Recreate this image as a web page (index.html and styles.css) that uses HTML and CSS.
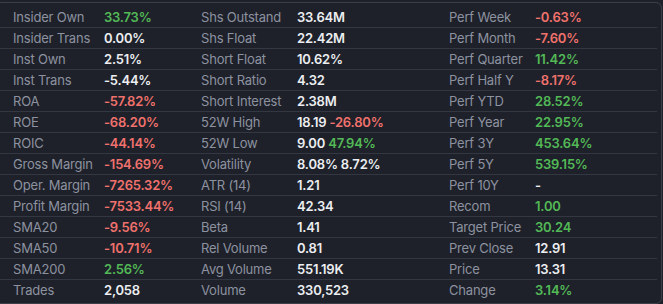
FILE: index.html
```html
<!DOCTYPE html>
<html>
<head>
<meta charset="utf-8">
<link rel="stylesheet" href="styles.css">
</head>
<body>
<div class="panel">
  <div class="row"><span class="lbl">Insider Own</span><span class="val up">33.73%</span><span class="lbl">Shs Outstand</span><span class="val">33.64M</span><span class="lbl">Perf Week</span><span class="val down">-0.63%</span></div>
  <div class="row"><span class="lbl">Insider Trans</span><span class="val">0.00%</span><span class="lbl">Shs Float</span><span class="val">22.42M</span><span class="lbl">Perf Month</span><span class="val down">-7.60%</span></div>
  <div class="row"><span class="lbl">Inst Own</span><span class="val">2.51%</span><span class="lbl">Short Float</span><span class="val">10.62%</span><span class="lbl">Perf Quarter</span><span class="val up">11.42%</span></div>
  <div class="row"><span class="lbl">Inst Trans</span><span class="val">-5.44%</span><span class="lbl">Short Ratio</span><span class="val">4.32</span><span class="lbl">Perf Half Y</span><span class="val down">-8.17%</span></div>
  <div class="row"><span class="lbl">ROA</span><span class="val down">-57.82%</span><span class="lbl">Short Interest</span><span class="val">2.38M</span><span class="lbl">Perf YTD</span><span class="val up">28.52%</span></div>
  <div class="row"><span class="lbl">ROE</span><span class="val down">-68.20%</span><span class="lbl">52W High</span><span class="val">18.19 <span class="down">-26.80%</span></span><span class="lbl">Perf Year</span><span class="val up">22.95%</span></div>
  <div class="row"><span class="lbl">ROIC</span><span class="val down">-44.14%</span><span class="lbl">52W Low</span><span class="val">9.00 <span class="up">47.94%</span></span><span class="lbl">Perf 3Y</span><span class="val up">453.64%</span></div>
  <div class="row"><span class="lbl">Gross Margin</span><span class="val down">-154.69%</span><span class="lbl">Volatility</span><span class="val">8.08% 8.72%</span><span class="lbl">Perf 5Y</span><span class="val up">539.15%</span></div>
  <div class="row"><span class="lbl">Oper. Margin</span><span class="val down">-7265.32%</span><span class="lbl">ATR (14)</span><span class="val">1.21</span><span class="lbl">Perf 10Y</span><span class="val">-</span></div>
  <div class="row"><span class="lbl">Profit Margin</span><span class="val down">-7533.44%</span><span class="lbl">RSI (14)</span><span class="val">42.34</span><span class="lbl">Recom</span><span class="val up">1.00</span></div>
  <div class="row"><span class="lbl">SMA20</span><span class="val down">-9.56%</span><span class="lbl">Beta</span><span class="val">1.41</span><span class="lbl">Target Price</span><span class="val up">30.24</span></div>
  <div class="row"><span class="lbl">SMA50</span><span class="val down">-10.71%</span><span class="lbl">Rel Volume</span><span class="val">0.81</span><span class="lbl">Prev Close</span><span class="val">12.91</span></div>
  <div class="row"><span class="lbl">SMA200</span><span class="val up">2.56%</span><span class="lbl">Avg Volume</span><span class="val">551.19K</span><span class="lbl">Price</span><span class="val">13.31</span></div>
  <div class="row"><span class="lbl">Trades</span><span class="val">2,058</span><span class="lbl">Volume</span><span class="val">330,523</span><span class="lbl">Change</span><span class="val up">3.14%</span></div>
</div>
</body>
</html>
```
FILE: styles.css
```css
html, body {
  margin: 0;
  padding: 0;
  background: #1e2129;
  overflow: hidden;
}
body {
  font-family: Inter, "Noto Sans", sans-serif;
  font-size: 13px;
  letter-spacing: -0.2px;
}
.panel {
  margin: 2px 1px 0 -5px;
  border: 1px solid #3b3f4a;
  border-radius: 6px;
  padding-top: 4px;
  height: 302px;
  box-sizing: border-box;
}
.row {
  display: grid;
  grid-template-columns: 91px 97px 96px 152px 86px 1fr;
  align-items: center;
  height: 20px;
  margin: 0 4px;
  padding-left: 13px;
  border-bottom: 1px solid #333742;
  white-space: nowrap;
}
.row:last-child {
  border-bottom: none;
}
.lbl {
  color: #8d92a0;
}
.val {
  color: #eceef1;
  font-weight: 600;
}
.up {
  color: #53b957;
}
.down {
  color: #f0716d;
}
```
